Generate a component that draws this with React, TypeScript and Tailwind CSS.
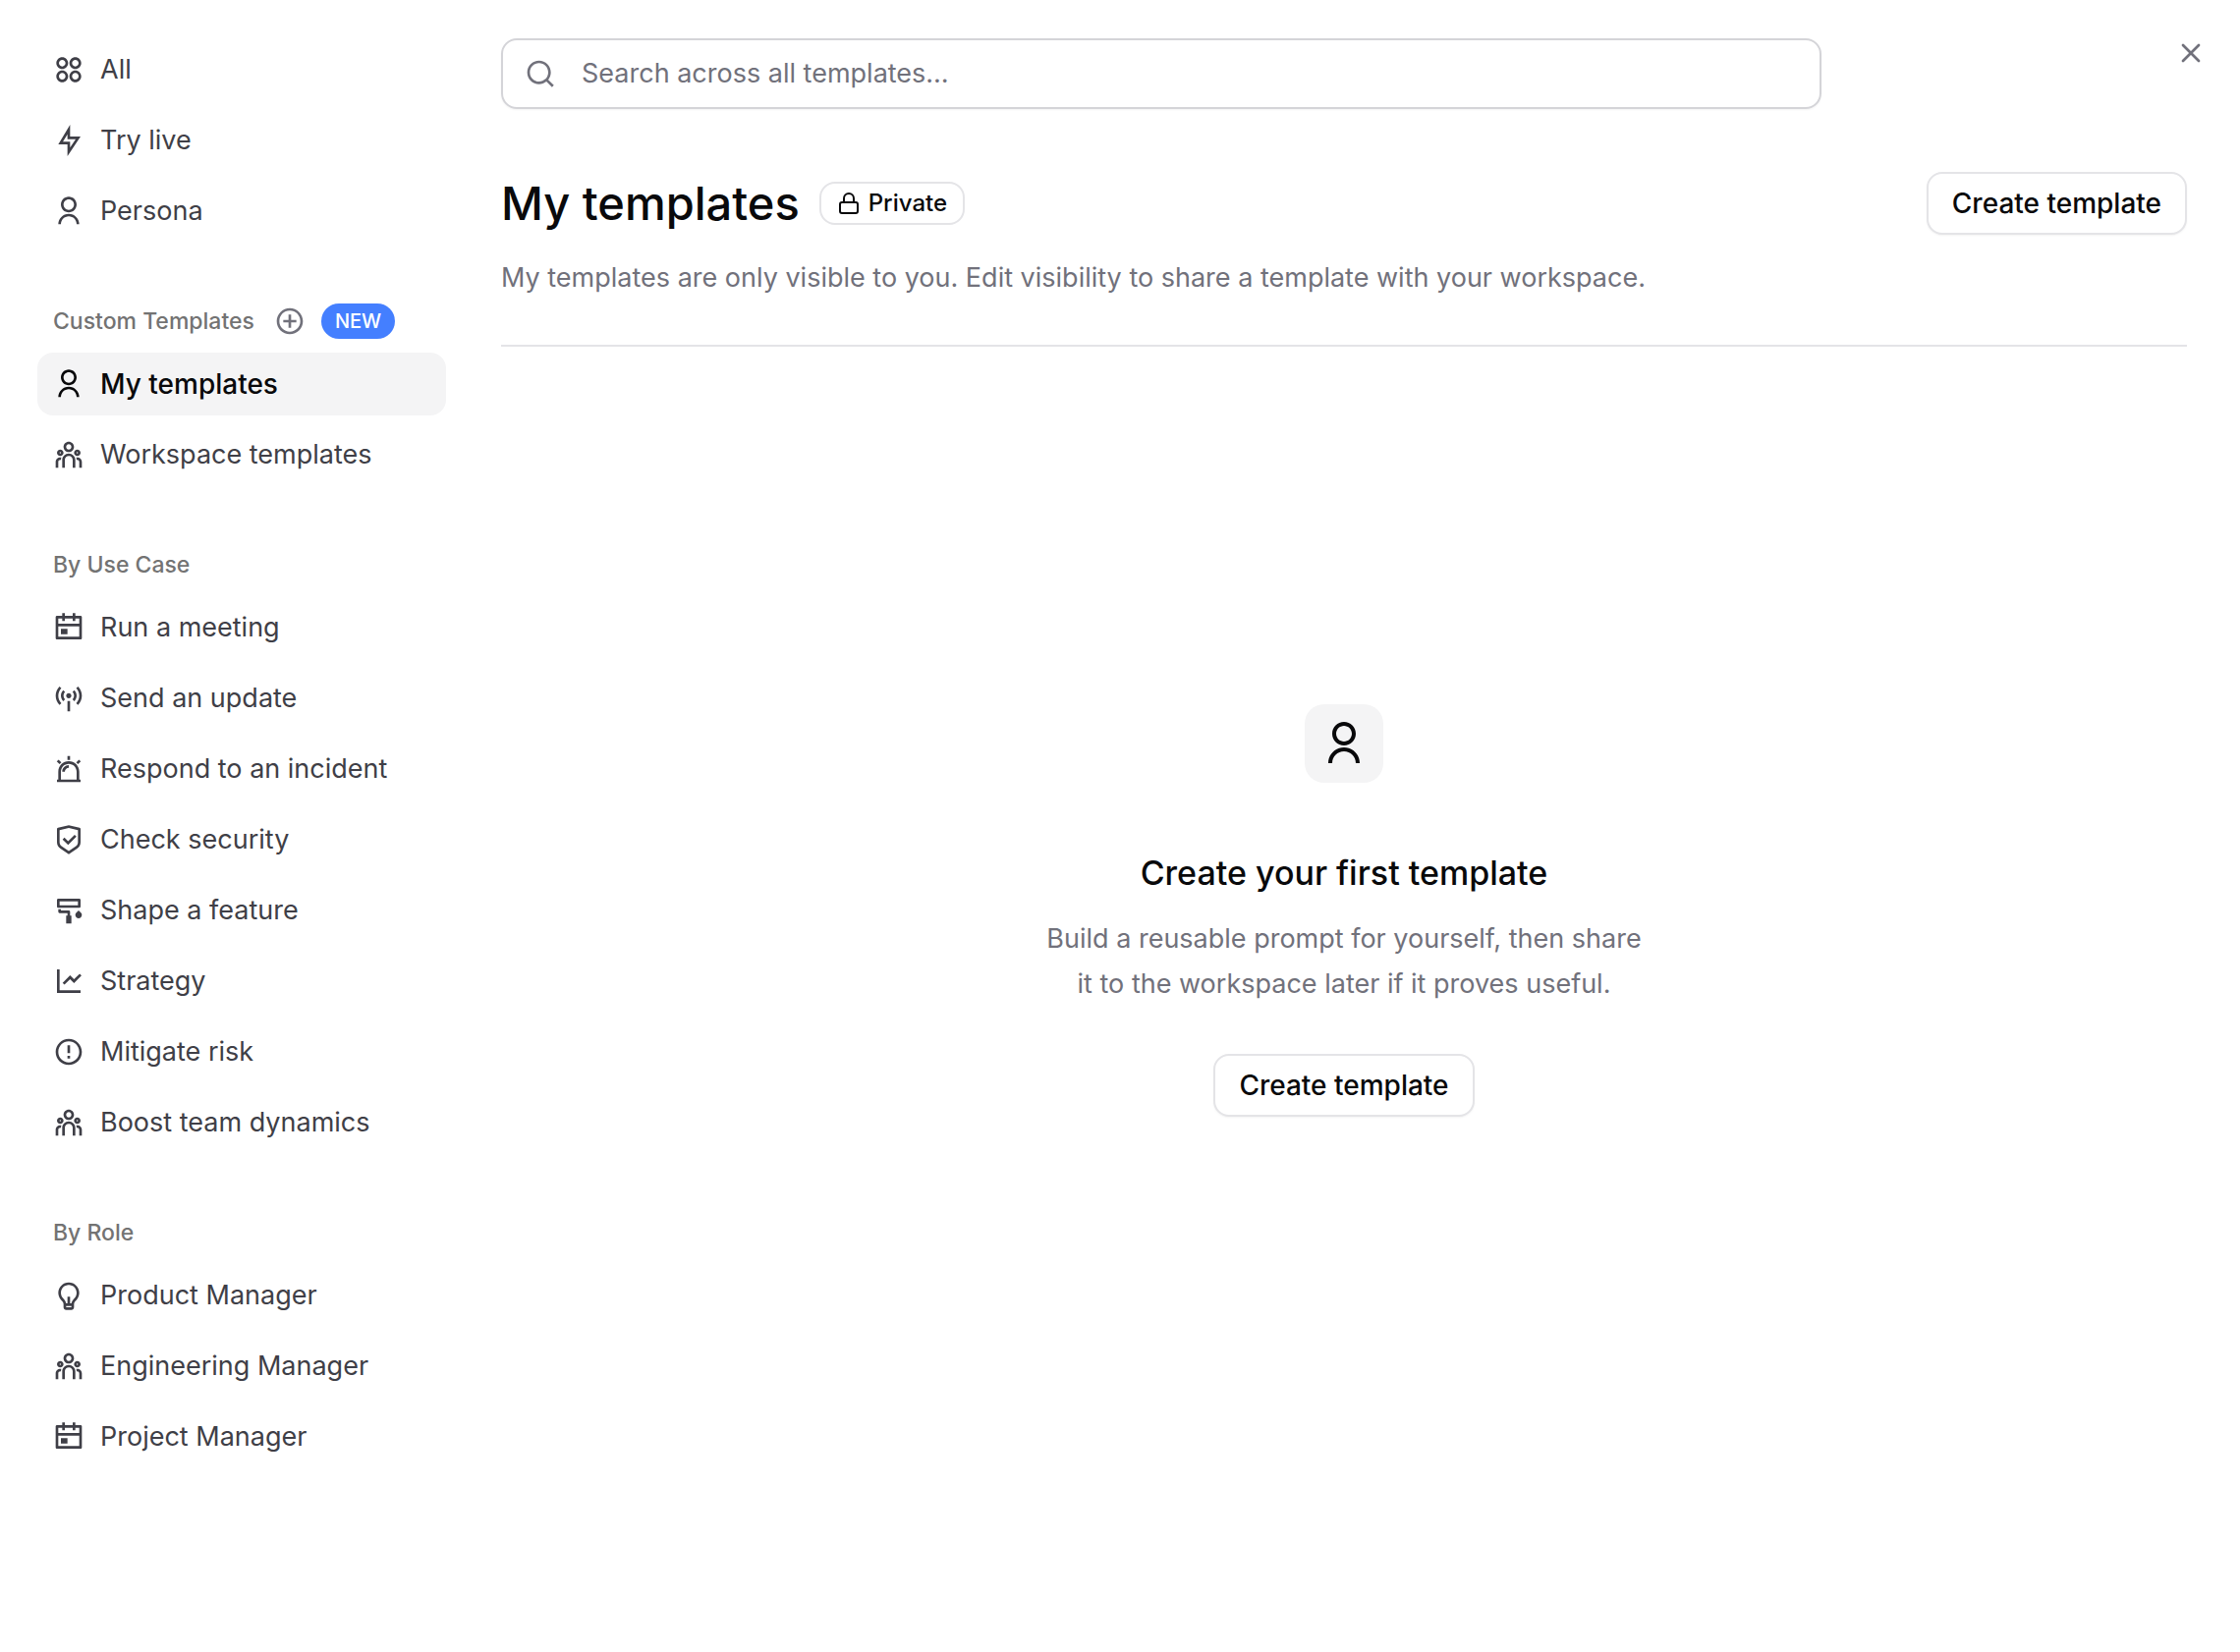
import { Lock, X } from "lucide-react";
import type { IconType } from "react-icons";
import {
  RiAddCircleLine,
  RiAlarmWarningLine,
  RiApps2Line,
  RiBroadcastLine,
  RiCalendarEventLine,
  RiErrorWarningLine,
  RiFlashlightLine,
  RiLightbulbLine,
  RiLineChartLine,
  RiPaintBrushLine,
  RiSearchLine,
  RiShieldCheckLine,
  RiTeamLine,
  RiUserLine,
} from "react-icons/ri";

type Item = { label: string; icon: IconType; active?: boolean };

const general: Item[] = [
  { label: "All", icon: RiApps2Line },
  { label: "Try live", icon: RiFlashlightLine },
  { label: "Persona", icon: RiUserLine },
];

const custom: Item[] = [
  { label: "My templates", icon: RiUserLine, active: true },
  { label: "Workspace templates", icon: RiTeamLine },
];

const useCases: Item[] = [
  { label: "Run a meeting", icon: RiCalendarEventLine },
  { label: "Send an update", icon: RiBroadcastLine },
  { label: "Respond to an incident", icon: RiAlarmWarningLine },
  { label: "Check security", icon: RiShieldCheckLine },
  { label: "Shape a feature", icon: RiPaintBrushLine },
  { label: "Strategy", icon: RiLineChartLine },
  { label: "Mitigate risk", icon: RiErrorWarningLine },
  { label: "Boost team dynamics", icon: RiTeamLine },
];

const roles: Item[] = [
  { label: "Product Manager", icon: RiLightbulbLine },
  { label: "Engineering Manager", icon: RiTeamLine },
  { label: "Project Manager", icon: RiCalendarEventLine },
];

const NavList = ({ items }: { items: Item[] }) => (
  <ul className="flex flex-col gap-2">
    {items.map(({ label, icon: Icon, active }) => (
      <li key={label}>
        <a
          href="#"
          aria-current={active ? "page" : undefined}
          className={
            active
              ? "flex h-16 items-center gap-4 rounded-2xl bg-zinc-100 px-4 text-[28px] font-medium text-zinc-950"
              : "flex h-16 items-center gap-4 rounded-2xl px-4 text-[27px] text-zinc-700"
          }
        >
          <Icon className="size-8 shrink-0" />
          {label}
        </a>
      </li>
    ))}
  </ul>
);

const SectionTitle = ({ children }: { children: string }) => (
  <h2 className="text-[23px] font-medium text-neutral-500">{children}</h2>
);

const CreateButton = () => (
  <button
    type="button"
    className="h-16 shrink-0 rounded-2xl border-2 border-zinc-200 bg-white px-6 text-[28px] font-medium text-zinc-950 shadow-xs"
  >
    Create template
  </button>
);

const Sidebar = () => (
  <nav aria-label="Templates" className="flex w-[416px] shrink-0 flex-col gap-14">
    <NavList items={general} />

    <section className="flex flex-col gap-2">
      <div className="flex h-12 items-center gap-5 pl-4">
        <SectionTitle>Custom Templates</SectionTitle>
        <div className="flex items-center gap-4">
          <button type="button" aria-label="Add custom template" className="text-zinc-500">
            <RiAddCircleLine className="size-8" />
          </button>
          <span className="flex h-9 items-center rounded-full bg-[#447fff] px-[14px] text-xl font-medium text-white">
            NEW
          </span>
        </div>
      </div>
      <NavList items={custom} />
    </section>

    <section className="flex flex-col gap-2">
      <div className="flex h-12 items-center pl-4">
        <SectionTitle>By Use Case</SectionTitle>
      </div>
      <NavList items={useCases} />
    </section>

    <section className="flex flex-col gap-2">
      <div className="flex h-12 items-center pl-4">
        <SectionTitle>By Role</SectionTitle>
      </div>
      <NavList items={roles} />
    </section>
  </nav>
);

const EmptyState = () => (
  <section className="flex flex-col items-center py-91 text-center">
    <div className="flex size-20 items-center justify-center rounded-[20px] bg-zinc-100 text-zinc-950">
      <RiUserLine className="size-12" />
    </div>
    <h2 className="mt-17 text-[34px] leading-12 font-medium text-zinc-950">Create your first template</h2>
    <p className="mt-5 mb-12 max-w-[620px] text-[27px] leading-[46px] text-zinc-500">
      Build a reusable prompt for yourself, then share it to the workspace later if it proves useful.
    </p>
    <CreateButton />
  </section>
);

export default function App() {
  return (
    <div className="relative flex min-h-screen gap-14 bg-white pt-[39px] pr-[54px] pl-[38px] font-[Inter,sans-serif]">
      <Sidebar />

      <main className="min-w-0 flex-1">
        <label className="flex h-18 max-w-[1344px] items-center gap-[26px] rounded-2xl border-2 border-zinc-300 px-[22px] shadow-xs">
          <RiSearchLine className="size-8 shrink-0 text-zinc-500" />
          <input
            type="text"
            aria-label="Search templates"
            placeholder="Search across all templates…"
            className="w-full bg-transparent text-[27px] text-zinc-950 outline-none placeholder:text-zinc-500"
          />
        </label>

        <header className="mt-16 border-b-2 border-zinc-200 pb-12">
          <div className="flex items-center justify-between">
            <div className="flex items-center gap-5">
              <h1 className="text-[47px] leading-12 font-medium text-zinc-950">My templates</h1>
              <span className="flex h-11 items-center gap-2 rounded-2xl border-2 border-zinc-200 px-4 text-2xl font-medium text-zinc-950">
                <Lock className="size-6" strokeWidth={2} />
                Private
              </span>
            </div>
            <CreateButton />
          </div>
          <p className="mt-6 text-[27px] leading-10 text-zinc-500">
            My templates are only visible to you. Edit visibility to share a template with your workspace.
          </p>
        </header>

        <EmptyState />
      </main>

      <button type="button" aria-label="Close" className="absolute top-[38px] right-[34px] text-zinc-500">
        <X className="size-8" strokeWidth={2} />
      </button>
    </div>
  );
}
